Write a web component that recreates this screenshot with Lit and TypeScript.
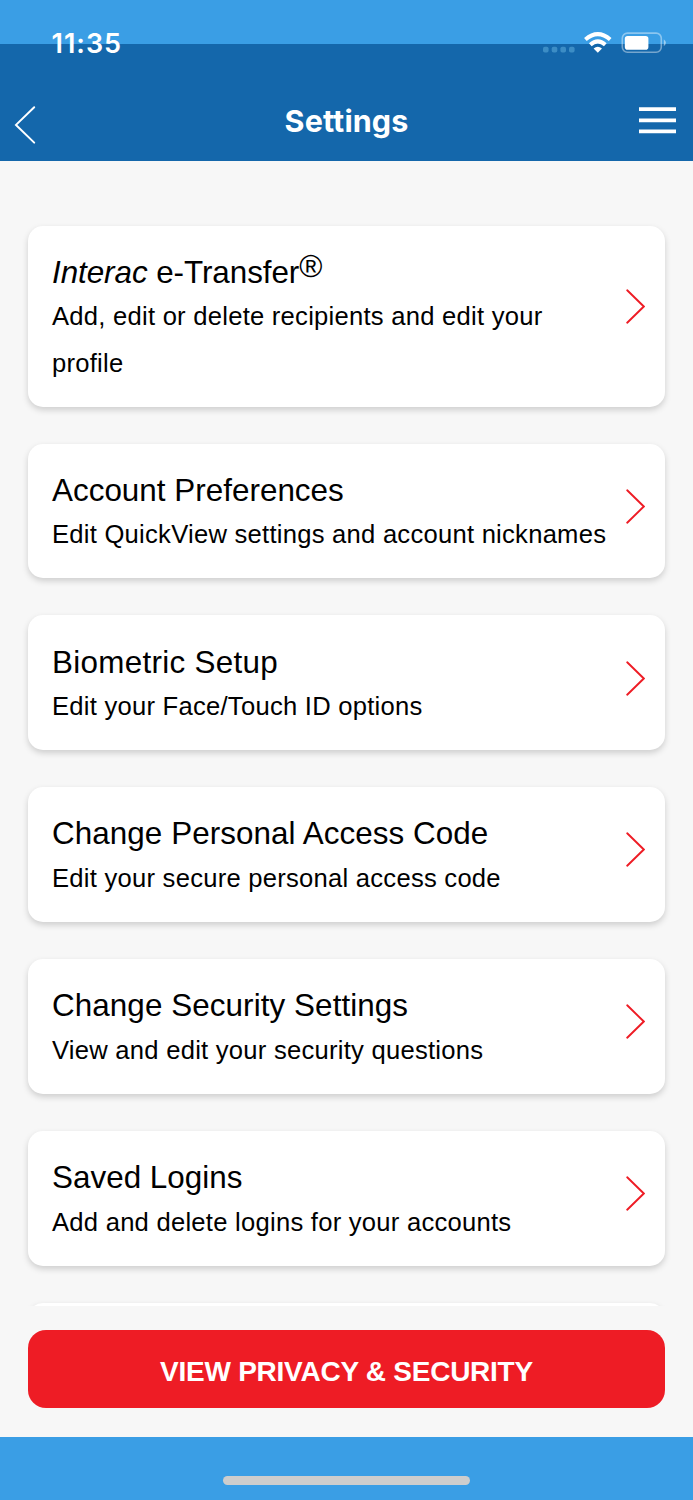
import { LitElement, html, css, svg } from "lit";
import { customElement, property } from "lit/decorators.js";
import { styleMap } from "lit/directives/style-map.js";

@customElement("setting-card")
class SettingCard extends LitElement {
  @property() heading = "";
  @property() detail = "";
  @property() lead = "";
  @property() mark = "";
  @property({ type: Number }) tracking = 0;

  static styles = css`
    :host { display: block; }
    .card {
      box-sizing: border-box;
      display: flex;
      justify-content: space-between;
      min-height: 134.8px;
      padding: 24.3px 20px 20.6px 24px;
      border-radius: 15px;
      background: #fff;
      box-shadow: 0 3px 6px rgba(0, 0, 0, 0.17);
      color: #000;
    }
    .title { font-size: 31.4px; line-height: 45px; height: 45px; white-space: nowrap; }
    .mark { font-size: 31.4px; line-height: 0; vertical-align: 6px; }
    .detail { font-size: 25.6px; line-height: 46.3px; letter-spacing: 0.25px; margin-top: -1.5px; }
    .text { flex: none; width: 562px; }
    .side { display: flex; flex-direction: column; margin: -15.4px 0 -20.6px; }
    .side::before { content: ""; flex: 2; }
    .side::after { content: ""; flex: 3; }
    svg { display: block; flex: none; }
  `;

  render() {
    return html`<div class="card">
      <div class="text">
        <div class="title" style=${styleMap({ letterSpacing: `${this.tracking}px` })}>${this.lead ? html`<i>${this.lead}</i> ` : ""}${this.heading}${this.mark ? html`<span class="mark">${this.mark}</span>` : ""}</div>
        <div class="detail">${this.detail}</div>
      </div>
      <div class="side">
        <svg width="20" height="35" viewBox="0 0 20 35">
          <path d="M2.2 1.3 L18.8 17.5 L2.2 33.7" fill="none" stroke="#ee1c25" stroke-width="1.9" stroke-linecap="round" />
        </svg>
      </div>
    </div>`;
  }
}

@customElement("app-root")
class AppRoot extends LitElement {
  static styles = css`
    :host {
      display: block;
      font-family: "Liberation Sans", Arial, sans-serif;
    }
    .screen {
      display: flex;
      flex-direction: column;
      height: 1500px;
      overflow: hidden;
      background: #f7f7f7;
    }
    .top {
      box-sizing: border-box;
      height: 160.7px;
      flex: none;
      background: linear-gradient(#3a9ee5 44.3px, #1467ab 44.3px);
      color: #fff;
      font-family: Inter, sans-serif;
    }
    .status {
      display: flex;
      justify-content: space-between;
      height: 80px;
      padding: 0 26px 0 51.5px;
    }
    .time { font-size: 27px; font-weight: 600; line-height: 87px; letter-spacing: 1px; }
    .nav {
      display: grid;
      grid-template-columns: 60px 1fr 60px;
      height: 80px;
    }
    .nav svg { display: block; }
    .name { text-align: center; font-size: 30.5px; font-weight: 650; line-height: 81px; letter-spacing: 0.1px; }
    .list {
      flex: 1;
      min-height: 0;
      overflow: hidden;
      display: flex;
      flex-direction: column;
      gap: 37px;
      padding: 64.9px 28px 0;
    }
    setting-card { flex: none; }
    .foot { flex: none; box-sizing: border-box; height: 131.3px; padding: 24.3px 28px 0; }
    .action {
      display: block;
      width: 100%;
      height: 77.5px;
      padding: 6px 0 0;
      border: 0;
      border-radius: 18px;
      background: #ee1c25;
      color: #fff;
      font: bold 28px/70px "Liberation Sans", Arial, sans-serif;
      letter-spacing: -0.25px;
    }
    .home {
      flex: none;
      box-sizing: border-box;
      height: 63px;
      padding-top: 38.5px;
      background: #3a9ee5;
    }
    .bar { width: 247.5px; height: 9.5px; margin: 0 auto; border-radius: 5px; background: #cdcdcd; }
  `;

  render() {
    const items = [
      { lead: "Interac", heading: "e-Transfer", mark: "®", tracking: -0.06, detail: "Add, edit or delete recipients and edit your profile" },
      { heading: "Account Preferences", tracking: 0.02, detail: "Edit QuickView settings and account nicknames" },
      { heading: "Biometric Setup", tracking: 0.3, detail: "Edit your Face/Touch ID options" },
      { heading: "Change Personal Access Code", tracking: 0.07, detail: "Edit your secure personal access code" },
      { heading: "Change Security Settings", tracking: 0.08, detail: "View and edit your security questions" },
      { heading: "Saved Logins", tracking: 0.02, detail: "Add and delete logins for your accounts" },
      { heading: "", detail: "" },
    ];
    return html`<main class="screen">
      <header class="top">
        <div class="status">
          <span class="time">11:35</span>
          <svg width="126" height="80" viewBox="541 0 126 80" fill="none">
            ${[543, 551.7, 560.4, 569].map((x) => svg`<rect x=${x} y="46.8" width="5.6" height="5.8" rx="1.8" fill="#3c8dc5" />`)}
            <g stroke="#fff" stroke-width="4">
              <path d="M585.4 39.6 Q597.8 28.8 610.2 39.6" />
              <path d="M590.3 44.8 Q597.8 38 605.3 44.8" />
            </g>
            <path d="M593.6 48.6 Q597.8 44.7 602 48.6 L597.8 52.8Z" fill="#fff" />
            <rect x="622.3" y="33.1" width="39" height="19.2" rx="5.2" stroke="#fff" stroke-opacity=".42" stroke-width="1.6" />
            <rect x="624.8" y="35.9" width="23.6" height="13.8" rx="2.8" fill="#fff" />
            <path d="M663.8 39.3 Q668 42.7 663.8 46.2Z" fill="#fff" fill-opacity=".5" />
          </svg>
        </div>
        <div class="nav">
          <svg width="60" height="80" viewBox="0 80 60 80"><path d="M34.2 107.3 L16 124.9 L34.2 142.6" fill="none" stroke="#fff" stroke-width="2" stroke-linecap="round" /></svg>
          <div class="name">Settings</div>
          <svg width="60" height="80" viewBox="633 80 60 80"><path d="M639 109.1H676M639 120.3H676M639 131.4H676" stroke="#fff" stroke-width="3.8" /></svg>
        </div>
      </header>
      <section class="list">
        ${items.map((i) => html`<setting-card .lead=${i.lead ?? ""} .heading=${i.heading} .mark=${i.mark ?? ""} .tracking=${i.tracking ?? 0} .detail=${i.detail}></setting-card>`)}
      </section>
      <footer class="foot"><button class="action">VIEW PRIVACY &amp; SECURITY</button></footer>
      <div class="home"><div class="bar"></div></div>
    </main>`;
  }
}
